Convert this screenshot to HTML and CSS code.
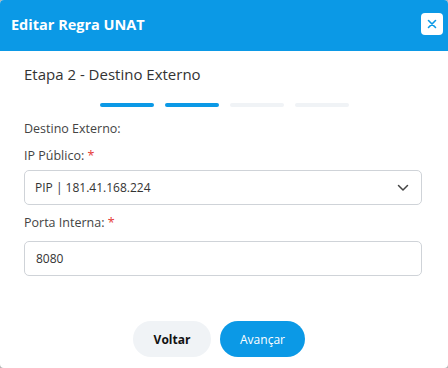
FILE: index.html
```html
<!DOCTYPE html>
<html lang="pt-BR">
<head>
    <meta charset="UTF-8">
    <meta name="viewport" content="width=device-width, initial-scale=1.0">
    <title>Editar Regra UNAT</title>
    <link rel="stylesheet" href="styles.css">
</head>
<body>
    <div class="modal">
        <header class="modal-header">
            <h1>Editar Regra UNAT</h1>
            <button class="close-btn" aria-label="Fechar">
                <svg width="10" height="10" viewBox="0 0 10 10">
                    <path d="M1.5 1.5 L8.5 8.5 M8.5 1.5 L1.5 8.5" stroke="#0b99e6" stroke-width="1.6" stroke-linecap="round"/>
                </svg>
            </button>
        </header>
        <div class="modal-body">
            <h2>Etapa 2 - Destino Externo</h2>
            <div class="steps">
                <span class="step done"></span>
                <span class="step done"></span>
                <span class="step"></span>
                <span class="step"></span>
            </div>
            <p class="section-label">Destino Externo:</p>
            <label class="field-label">IP Público: <span class="req">*</span></label>
            <div class="select">
                <span>PIP | 181.41.168.224</span>
                <svg width="12" height="8" viewBox="0 0 12 8">
                    <path d="M1.5 1.5 L6 6 L10.5 1.5" fill="none" stroke="#444" stroke-width="1.5" stroke-linecap="round" stroke-linejoin="round"/>
                </svg>
            </div>
            <label class="field-label">Porta Interna: <span class="req">*</span></label>
            <input class="text-input" type="text" value="8080">
        </div>
        <div class="modal-footer">
            <button class="btn btn-back">Voltar</button>
            <button class="btn btn-next">Avançar</button>
        </div>
    </div>
</body>
</html>
```

FILE: styles.css
```css
body {
    margin: 0;
    padding: 0;
    background-color: #b5b5b5;
    font-family: "Open Sans", "Noto Sans", sans-serif;
}
.modal {
    width: 448px;
    height: 368px;
    background-color: white;
    border-radius: 4px;
    overflow: hidden;
    display: flex;
    flex-direction: column;
}
.modal-header {
    background-color: #0b99e6;
    height: 51px;
    display: flex;
    align-items: center;
    justify-content: space-between;
    padding: 0 5px 3px 11px;
    box-sizing: border-box;
}
.modal-header h1 {
    margin: 0;
    color: white;
    font-size: 14.5px;
    font-weight: 700;
}
.close-btn {
    width: 22px;
    height: 22px;
    border: none;
    border-radius: 4px;
    background-color: white;
    padding: 0;
    display: flex;
    align-items: center;
    justify-content: center;
    cursor: pointer;
}
.modal-body {
    padding: 13px 26px 0 24px;
    flex: 1;
}
.modal-body h2 {
    margin: 0;
    font-size: 15px;
    font-weight: 400;
    color: #333;
    line-height: 20px;
}
.steps {
    display: flex;
    justify-content: center;
    gap: 11px;
    margin: 19px 0 0 2px;
}
.step {
    width: 54px;
    height: 4px;
    border-radius: 2px;
    background-color: #f0f3f6;
}
.step.done {
    background-color: #0b99e6;
}
.section-label {
    margin: 13px 0 0;
    font-size: 12.5px;
    color: #444;
    line-height: 18px;
}
.field-label {
    display: block;
    margin-top: 9px;
    font-size: 12.5px;
    color: #444;
    line-height: 18px;
}
.req {
    color: #e53935;
}
.select {
    margin-top: 5px;
    height: 35px;
    border: 1px solid #cfd3d8;
    border-radius: 5px;
    box-sizing: border-box;
    display: flex;
    align-items: center;
    justify-content: space-between;
    padding: 0 12px 0 10px;
    font-size: 12px;
    color: #333;
}
.text-input {
    display: block;
    width: 100%;
    margin-top: 9px;
    height: 35px;
    border: 1px solid #cfd3d8;
    border-radius: 5px;
    box-sizing: border-box;
    padding: 0 11px;
    font-family: inherit;
    font-size: 12px;
    color: #333;
}
.modal-footer {
    display: flex;
    justify-content: center;
    gap: 9px;
    padding: 0 10px 11px 0;
}
.btn {
    height: 36px;
    border: none;
    border-radius: 18px;
    font-family: inherit;
    font-size: 12px;
    cursor: pointer;
}
.btn-back {
    width: 78px;
    background-color: #f0f3f6;
    color: #111;
    font-weight: 700;
}
.btn-next {
    width: 85px;
    background-color: #0b99e6;
    color: white;
}
```
